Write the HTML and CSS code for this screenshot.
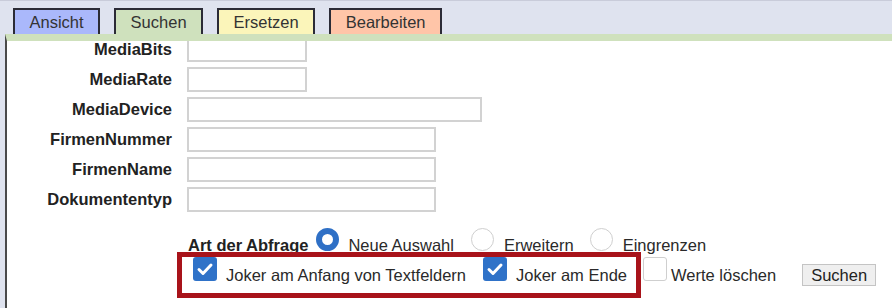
FILE: index.html
```html
<!DOCTYPE html>
<html lang="de">
  <head>
    <meta charset="UTF-8" />
    <meta name="viewport" content="width=device-width, initial-scale=1.0" />
    <title>Suchen</title>
    <link rel="stylesheet" href="styles.css">
  </head>
  <body>
    <div class="tabs">
      <span class="tab tab-ansicht">Ansicht</span>
      <span class="tab tab-suchen">Suchen</span>
      <span class="tab tab-ersetzen">Ersetzen</span>
      <span class="tab tab-bearbeiten">Bearbeiten</span>
    </div>

    <div class="panel">
      <div class="fields">
        <label>MediaBits</label>
        <input type="text" class="short" />
        <label>MediaRate</label>
        <input type="text" class="short" />
        <label>MediaDevice</label>
        <input type="text" class="wide" />
        <label>FirmenNummer</label>
        <input type="text" class="mid" />
        <label>FirmenName</label>
        <input type="text" class="mid" />
        <label>Dokumententyp</label>
        <input type="text" class="mid" />
      </div>

      <div class="query">
        <div class="row">
          <strong>Art der Abfrage</strong>
          <span class="radio checked first"></span>
          <span class="opt">Neue Auswahl</span>
          <span class="radio"></span>
          <span class="opt">Erweitern</span>
          <span class="radio last"></span>
          <span class="opt">Eingrenzen</span>
        </div>
        <div class="row row-check">
          <span class="check checked c1">
            <svg width="24" height="24" viewBox="0 0 24 24"><path d="M6 12.5l4 4 8-8.5" fill="none" stroke="#fff" stroke-width="3" stroke-linecap="round" stroke-linejoin="round"/></svg>
          </span>
          <span class="opt">Joker am Anfang von Textfeldern</span>
          <span class="check checked c2">
            <svg width="24" height="24" viewBox="0 0 24 24"><path d="M6 12.5l4 4 8-8.5" fill="none" stroke="#fff" stroke-width="3" stroke-linecap="round" stroke-linejoin="round"/></svg>
          </span>
          <span class="opt">Joker am Ende</span>
          <span class="check c3"></span>
          <span class="opt">Werte löschen</span>
          <button class="btn">Suchen</button>
        </div>
        <div class="highlight"></div>
      </div>
    </div>
  </body>
</html>
```

FILE: styles.css
```css
body {
    font-family: "Liberation Sans", Arial, sans-serif;
    font-size: 16.5px;
    background-color: #dfe3ef;
    color: #222;
    margin: 0;
    padding: 0;
    height: 308px;
    overflow: hidden;
}
.tabs {
    display: flex;
    gap: 14px;
    height: 26px;
    padding: 7px 0 0 13px;
    border-top: 1px solid #c9ccda;
}
.tab {
    height: 24px;
    line-height: 25px;
    padding: 0 14.5px;
    border: 2px solid #2b2b36;
    border-bottom: none;
    color: #333;
}
.tab-ansicht { background-color: #aab8fb; }
.tab-suchen { background-color: #cfe1bd; }
.tab-ersetzen { background-color: #fbf5ba; }
.tab-bearbeiten { background-color: #ffc5a8; }

.panel {
    margin-left: 5px;
    background-color: #fff;
    border-top: 7px solid #cfe1bd;
    border-left: 2px solid #4a4a4a;
    height: 267px;
    overflow: hidden;
}
.fields {
    display: grid;
    grid-template-columns: 165px auto;
    grid-auto-rows: 25px;
    column-gap: 15px;
    row-gap: 5px;
    margin-top: -4px;
    align-items: center;
}
.fields label {
    text-align: right;
    font-weight: bold;
}
.fields input {
    box-sizing: border-box;
    height: 25px;
    border: 2px solid #d2d2d2;
    background: #fff;
    margin: 0;
}
.short { width: 120px; }
.mid { width: 249px; }
.wide { width: 295px; }

.query {
    position: relative;
    margin-top: 16px;
    padding-left: 181px;
}
.row {
    display: flex;
    align-items: baseline;
    line-height: 20px;
}
.row-check {
    margin-top: 2px;
}
.radio {
    box-sizing: border-box;
    width: 23px;
    height: 23px;
    border-radius: 50%;
    border: 1.5px solid #cfcfcf;
    background: #fff;
    margin: 0 10px 0 17px;
}
.radio.first { margin-left: 8px; margin-right: 9px; }
.radio.last { margin-left: 16px; }
.radio.checked {
    border: 6px solid #2f70c6;
}
.check {
    box-sizing: border-box;
    width: 24px;
    height: 24px;
    border-radius: 3px;
    border: 1.5px solid #cfcfcf;
    background: #fff;
    margin: 0 9px 0 17px;
}
.check svg { display: block; }
.check.checked {
    border: none;
    background-color: #2f72c8;
}
.check.c1 { margin-left: 5px; }
.check.c3 { margin-left: 16px; margin-right: 4px; }
.opt { color: #2a2a2a; }
.btn {
    font-family: inherit;
    font-size: 16.5px;
    line-height: 18px;
    padding: 1px 8px;
    margin-left: 26px;
    background-color: #efefef;
    border: 1px solid #c4c4c4;
    border-radius: 0;
    color: #222;
}
.highlight {
    position: absolute;
    left: 170px;
    top: 24px;
    width: 464px;
    height: 46px;
    box-sizing: border-box;
    border: 5px solid #a8131a;
}
```
